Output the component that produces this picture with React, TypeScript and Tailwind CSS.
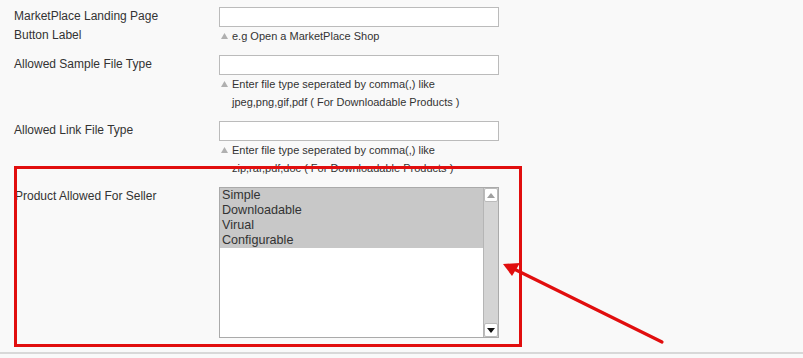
import React from "react";

const Hint = ({ children }: { children: React.ReactNode }) => (
  <div className="flex text-[11px] leading-[18px] text-[#333]">
    <span className="flex h-[18px] w-[13px] shrink-0 items-center pl-[2px]">
      <svg width="7" height="6" viewBox="0 0 7 6"><path d="M0 6 L3.5 0 L7 6 Z" fill="#b0b0b0" /></svg>
    </span>
    <div>{children}</div>
  </div>
);

const Row = ({ label, children }: { label: React.ReactNode; children: React.ReactNode }) => (
  <div className="flex mb-[10px]">
    <div className="w-[219px] shrink-0 pl-[14px] text-[12px] leading-[19px] text-[#333]">{label}</div>
    <div className="w-[280px]">{children}</div>
  </div>
);

const Input = () => <div className="h-[20px] w-[280px] border border-[#bbb] bg-white" />;

export default function App() {
  const options = ["Simple", "Downloadable", "Virual", "Configurable"];
  return (
    <div
      className="relative w-[803px] h-[358px] overflow-hidden bg-[#f9f9f9]"
      style={{ fontFamily: '"Liberation Sans", Arial, sans-serif' }}
    >
      <div className="pt-[7px] h-[354px] border-b-2 border-[#d8d8d8]">
        <Row label={<>MarketPlace Landing Page<br />Button Label</>}>
          <Input />
          <Hint>e.g Open a MarketPlace Shop</Hint>
        </Row>
        <Row label="Allowed Sample File Type">
          <Input />
          <Hint>
            Enter file type seperated by comma(,) like
            <br />
            jpeg,png,gif,pdf ( For Downloadable Products )
          </Hint>
        </Row>
        <Row label="Allowed Link File Type">
          <Input />
          <Hint>
            Enter file type seperated by comma(,) like
            <br />
            zip,rar,pdf,doc ( For Downloadable Products )
          </Hint>
        </Row>
        <Row label={<span className="pl-px">Product Allowed For Seller</span>}>
          <div className="flex h-[151px] w-[280px] border border-[#aaa] bg-white">
            <div className="flex-1">
              {options.map((o) => (
                <div key={o} className="h-[15px] bg-[#c8c8c8] pl-[2px] text-[12.6px] leading-[15px] text-[#333]">
                  {o}
                </div>
              ))}
            </div>
            <div className="flex w-[15px] flex-col border-l border-[#b5b5b5] bg-[#d4d4d4]">
              <div className="flex h-[14px] items-center justify-center rounded-[2px] border border-[#bbb] bg-white">
                <svg width="8" height="5" viewBox="0 0 8 5"><path d="M0 5 L4 0 L8 5 Z" fill="#a0a0a0" /></svg>
              </div>
              <div className="flex-1" />
              <div className="flex h-[14px] items-center justify-center rounded-[2px] border border-[#bbb] bg-white">
                <svg width="8" height="5" viewBox="0 0 8 5"><path d="M0 0 L8 0 L4 5 Z" fill="#111" /></svg>
              </div>
            </div>
          </div>
        </Row>
      </div>

      {/* annotation box */}
      <div className="absolute left-[14px] top-[166px] h-[181px] w-[508px] border-[3px] border-[#e10e0e]" />
      {/* annotation arrow */}
      <svg className="absolute left-0 top-0" width="803" height="358" viewBox="0 0 803 358">
        <line x1="662" y1="342" x2="512" y2="268" stroke="#e10e0e" strokeWidth="3.2" strokeLinecap="round" />
        <path d="M503 264 L520 263 L512 276 Z" fill="#e10e0e" />
      </svg>
    </div>
  );
}
